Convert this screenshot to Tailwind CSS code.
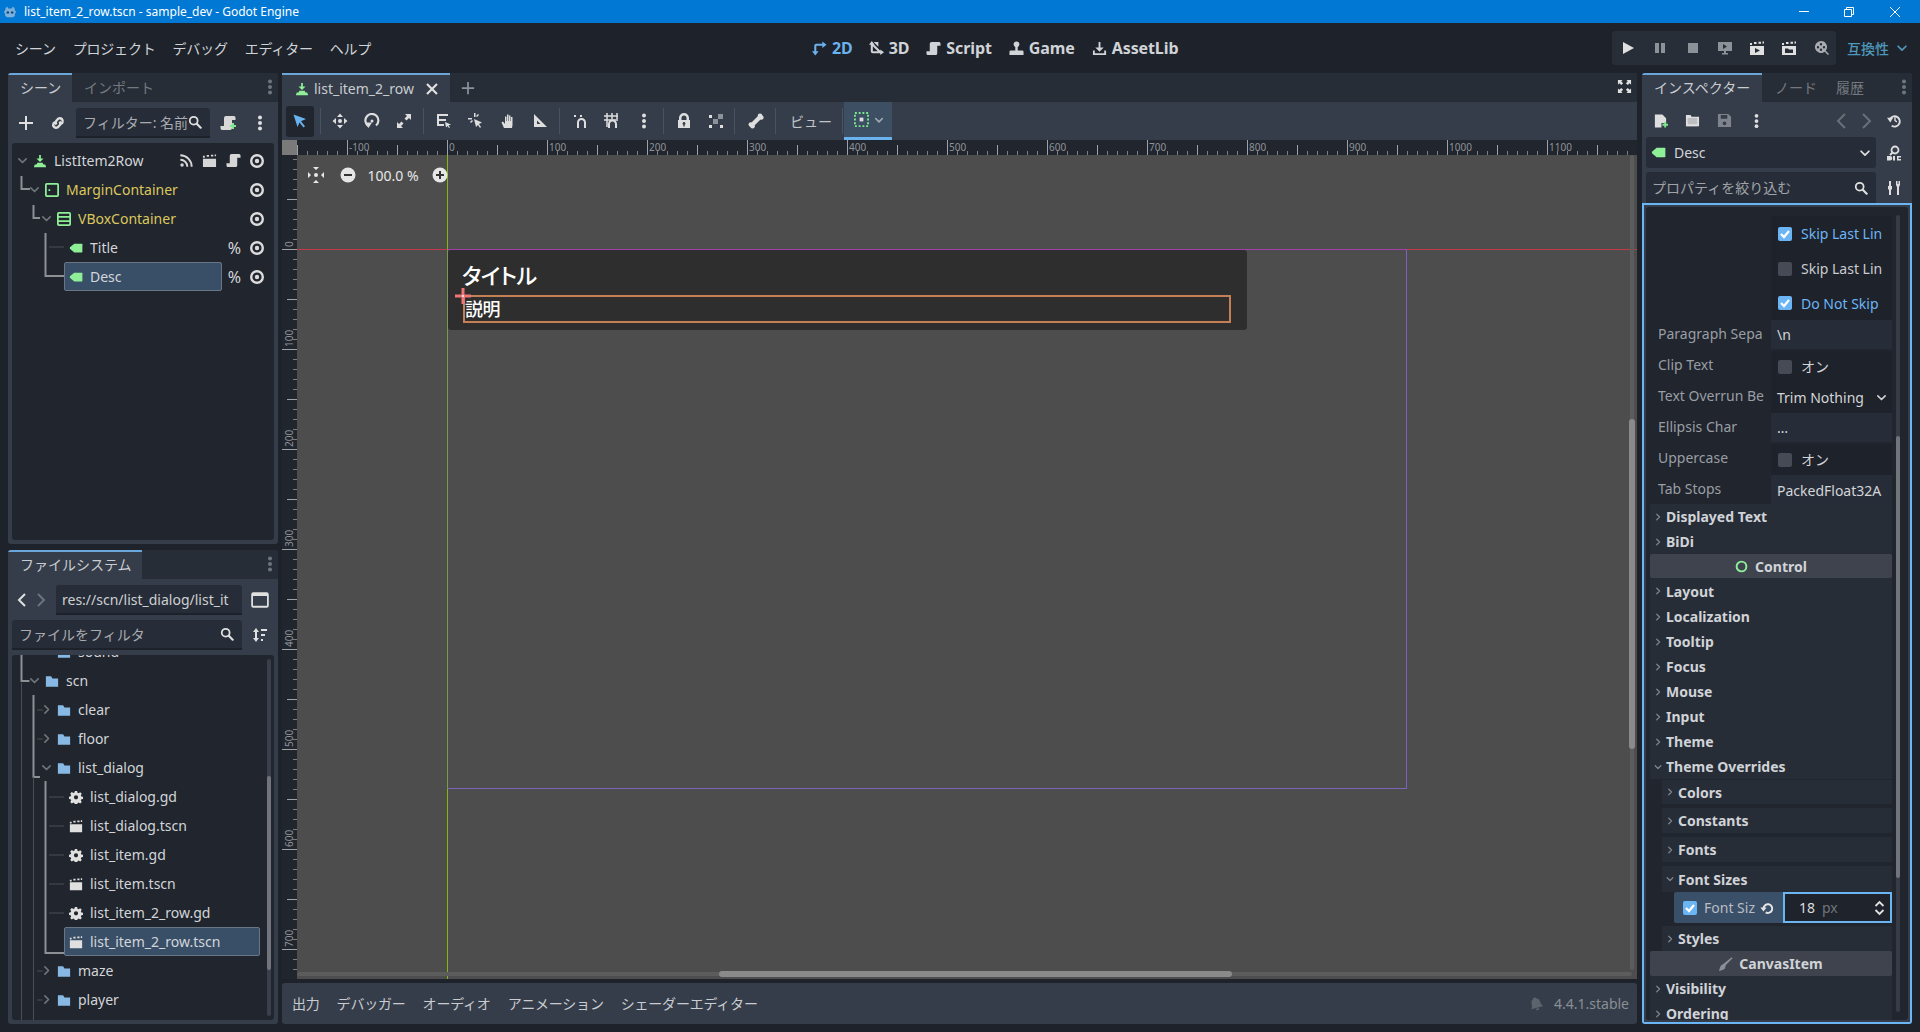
<!DOCTYPE html>
<html lang="ja">
<head>
  <meta charset="UTF-8" />
  <title>list_item_2_row.tscn - sample_dev - Godot Engine</title>
  <script src="https://cdn.jsdelivr.net/npm/@tailwindcss/browser@4"></script>
</head>
<body class="font-['Noto_Sans','Noto_Sans_CJK_JP',sans-serif] text-[14px] text-[#d3d5d8]">
  <!-- shared icons -->
  <svg class="absolute w-0 h-0" aria-hidden="true">
    <symbol id="i-eye" viewBox="0 0 16 16"><circle cx="8" cy="8" r="5.800" fill="none" stroke="currentColor" stroke-width="2.400"/><circle cx="8" cy="8" r="2.200"/></symbol>
    <symbol id="i-tag" viewBox="0 0 16 16"><path d="M6 3h8.500q.8 0 .8.8v8.400q0 .8-.8.8H6L1 8.800V7.200z"/></symbol>
    <symbol id="i-scene" viewBox="0 0 16 16"><path d="M7 1h2v4h3L8 9 4 5h3zM5 10h6l1 2h2l1 3H1l1-3h2z"/></symbol>
    <symbol id="i-down" viewBox="0 0 16 16"><path d="M3.500 6 8 10.500 12.500 6" fill="none" stroke="currentColor" stroke-width="2" stroke-linecap="round" stroke-linejoin="round"/></symbol>
    <symbol id="i-right" viewBox="0 0 16 16"><path d="M6 3.500 10.500 8 6 12.500" fill="none" stroke="currentColor" stroke-width="2" stroke-linecap="round" stroke-linejoin="round"/></symbol>
    <symbol id="i-search" viewBox="0 0 16 16"><circle cx="6.500" cy="6.500" r="4.500" fill="none" stroke="currentColor" stroke-width="2"/><path d="m10 10 4.500 4.500" stroke="currentColor" stroke-width="2.400" stroke-linecap="round"/></symbol>
    <symbol id="i-dots" viewBox="0 0 16 16"><circle cx="8" cy="2.500" r="2"/><circle cx="8" cy="8" r="2"/><circle cx="8" cy="13.500" r="2"/></symbol>
    <symbol id="i-folder" viewBox="0 0 16 16"><path d="M1 2.500h6l1.500 2.500H15v9.500H1z"/></symbol>
    <symbol id="i-gear" viewBox="0 0 16 16"><path fill-rule="evenodd" d="M6.700 1h2.600l.4 2 1.300.6 1.800-1.100 1.800 1.800-1.100 1.800.6 1.300 2 .4v2.400l-2 .4-.6 1.300 1.100 1.800-1.800 1.800-1.800-1.100-1.300.6-.4 2H6.700l-.4-2-1.300-.6-1.800 1.100-1.800-1.800 1.100-1.800-.6-1.300-2-.4V7.600l2-.4.6-1.300L1.400 4.100l1.800-1.800L5 3.400l1.300-.6zM8 6a2.400 2.400 0 1 0 0 4.800A2.400 2.400 0 0 0 8 6z"/></symbol>
    <symbol id="i-clap" viewBox="0 0 16 16"><path d="M1 6h14v9H1zM1 3h2v2H1zM5 2h2.500v2H5zM9.500 1.800H12v2H9.500zM13.500 1.500H15v2h-1.500z"/></symbol>
    <symbol id="i-script" viewBox="0 0 16 16"><path d="M6 1h8q1.500 0 1.500 2v2H12v8q0 2-2 2H2q-1.500 0-1.500-2v-2H4V3q0-2 2-2z"/></symbol>
    <symbol id="i-reset" viewBox="0 0 16 16"><path d="M4 8.500a5 5 0 1 1 2.500 4.500" fill="none" stroke="currentColor" stroke-width="2.200"/><path d="M.5 7.500h7l-3.500 4.500z"/></symbol>
  </svg>

  <div class="w-[1920px] h-[1032px] flex flex-col overflow-hidden bg-[#1e232b]">
    <!-- window title -->
    <div class="h-[23px] bg-[#0078d4] flex items-center text-white text-[12px] shrink-0">
      <svg class="w-[14px] h-[14px] ml-[3px] text-[#7fb0d8]" viewBox="0 0 16 16" fill="currentColor"><path d="M3 3l2-1 1 2h4l1-2 2 1 .5 3L15 8l-1.500 2v2.500L11 14H5l-2.500-1.500V10L1 8l1.500-2z"/><circle cx="5.500" cy="8.500" r="1.500" fill="#0b4e85"/><circle cx="10.500" cy="8.500" r="1.500" fill="#0b4e85"/></svg>
      <span class="ml-[7px] leading-none">list_item_2_row.tscn - sample_dev - Godot Engine</span>
      <div class="ml-auto flex items-center">
        <span class="w-[10px] h-px bg-white mr-[35px]"></span>
        <svg class="w-[10px] h-[10px] mr-[36px]" viewBox="0 0 10 10" fill="none" stroke="white"><path d="M.5 2.500h7v7h-7zM2.500 2.500v-2h7v7h-2"/></svg>
        <svg class="w-[10px] h-[10px] mr-[20px]" viewBox="0 0 10 10" fill="none" stroke="white"><path d="m0 0 10 10M10 0 0 10"/></svg>
      </div>
    </div>

    <!-- menu bar -->
    <div class="h-[50px] shrink-0 relative flex items-center">
      <nav class="flex gap-[17px] pl-[15px] text-[#d0d3d7] tracking-[-0.2px]">
        <span>シーン</span><span>プロジェクト</span><span>デバッグ</span><span>エディター</span><span>ヘルプ</span>
      </nav>
      <div class="absolute left-[812px] top-0 h-full flex items-center gap-[17px] text-[16px] font-bold text-[#d0d3d7] tracking-[-0.1px]">
        <span class="flex items-center gap-[5px] mr-[-1px] text-[#6ab2ee]"><svg class="w-[15px] h-[15px]" viewBox="0 0 16 16" fill="none" stroke="currentColor" stroke-width="2.200"><path d="M3.500 13V5q0-1 1-1h7"/><path fill="currentColor" stroke="none" d="M11 .5 15.500 4 11 7.500zM0 11h7l-3.500 4.500z"/></svg>2D</span>
        <span class="flex items-center gap-[5px]"><svg class="w-[15px] h-[15px]" viewBox="0 0 16 16" fill="none" stroke="currentColor" stroke-width="2.200"><path d="M3 2v9q0 1 1 1h9M3.500 3.500l8 8"/><path fill="currentColor" stroke="none" d="M3 0 6 4H0zM16 12l-4 3V9zM5 1h5v5z"/></svg>3D</span>
        <span class="flex items-center gap-[5px]"><svg class="w-[15px] h-[15px]" fill="currentColor"><use href="#i-script"/></svg>Script</span>
        <span class="flex items-center gap-[5px]"><svg class="w-[15px] h-[15px]" viewBox="0 0 16 16" fill="currentColor"><circle cx="8" cy="3.500" r="3"/><path d="M6.700 5h2.600v5H14q1.500 0 1.500 1.500V15H.5v-3.500Q.5 10 2 10h4.700z"/></svg>Game</span>
        <span class="flex items-center gap-[5px]"><svg class="w-[15px] h-[15px]" viewBox="0 0 16 16" fill="currentColor"><path d="M7 1h2v6h3.500L8 11.500 3.500 7H7zM1 10h2v3h10v-3h2v5H1z"/></svg>AssetLib</span>
      </div>
      <div class="ml-auto flex items-center">
        <div class="w-[224px] h-[34px] rounded-[3px] bg-[#282e38] flex items-center gap-[16.3px] pl-[8px] text-[#e0e0e0]">
          <svg class="w-[16px] h-[16px]" viewBox="0 0 16 16" fill="currentColor"><path d="M3 2l11 6-11 6z"/></svg>
          <svg class="w-[16px] h-[16px] text-[#8d9198]" viewBox="0 0 16 16" fill="currentColor"><path d="M3 3h4v10H3zM9 3h4v10H9z"/></svg>
          <svg class="w-[16px] h-[16px] text-[#8d9198]" viewBox="0 0 16 16" fill="currentColor"><path d="M3 3h10v10H3z"/></svg>
          <svg class="w-[16px] h-[16px] text-[#8d9198]" viewBox="0 0 16 16" fill="currentColor"><path fill-rule="evenodd" d="M1 2h14v9H9v2h2v1.500H5V13h2v-2H1zM6 4v5l4-2.500z"/></svg>
          <svg class="w-[16px] h-[16px]" viewBox="0 0 16 16" fill="currentColor"><path fill-rule="evenodd" d="M1 6h14v9H1zM6 8v5l5-2.500zM1 3h2v2H1zM5 2h2.500v2H5zM9.500 1.800H12v2H9.500zM13.500 1.500H15v2h-1.500z"/></svg>
          <svg class="w-[16px] h-[16px]" viewBox="0 0 16 16" fill="currentColor"><path fill-rule="evenodd" d="M1 6h14v9H1zM4 8.500V13h8V9.500H8l-1-1zM1 3h2v2H1zM5 2h2.500v2H5zM9.500 1.800H12v2H9.500zM13.500 1.500H15v2h-1.500z"/></svg>
          <svg class="w-[16px] h-[16px] text-[#a9acb1]" viewBox="0 0 16 16" fill="currentColor"><path fill-rule="evenodd" d="M7 1a6 6 0 0 1 4.700 9.700l3.300 3.300-1 1-3.300-3.300A6 6 0 1 1 7 1zM7 3a1.200 1.200 0 1 0 0 2.400A1.200 1.200 0 0 0 7 3zM4 6a1.200 1.200 0 1 0 0 2.400A1.200 1.200 0 0 0 4 6zM10 6a1.200 1.200 0 1 0 0 2.400A1.200 1.200 0 0 0 10 6zM7 8.600a1.200 1.200 0 1 0 0 2.400 1.200 1.200 0 0 0 0-2.400z"/></svg>
        </div>
        <span class="ml-[11px] text-[#4f97bb] font-medium">互換性</span>
        <svg class="w-[14px] h-[14px] ml-[6px] mr-[11px] text-[#4f97bb]" fill="currentColor"><use href="#i-down"/></svg>
      </div>
    </div>

    <div class="flex-1 flex px-[8px] pb-[8px] min-h-0">
      <!-- left docks -->
      <div class="w-[270px] shrink-0 flex flex-col gap-[6px]">
        <section class="h-[471px] flex flex-col rounded-[3px] bg-[#353d4a] overflow-hidden">
          <div class="h-[29px] bg-[#272d37] flex relative">
            <div class="w-[64px] border-t-2 border-[#6aa6da] bg-[#353d4a] pl-[12px] pt-[2px] text-[#c9ccd0]">シーン</div>
            <div class="pl-[12px] pt-[4px] text-[#74797f]">インポート</div>
            <svg class="absolute right-0 top-[6px] w-[16px] h-[16px] text-[#70757c]" fill="currentColor"><use href="#i-dots"/></svg>
          </div>
          <div class="h-[41px] pt-[1px] flex items-center">
            <svg class="w-[16px] h-[16px] ml-[10px] text-[#e0e0e0]" viewBox="0 0 16 16" fill="currentColor"><path d="M7 1h2v6h6v2H9v6H7V9H1V7h6z"/></svg>
            <svg class="w-[16px] h-[16px] ml-[16px] text-[#e0e0e0]" viewBox="0 0 16 16" fill="none" stroke="currentColor" stroke-width="2.400"><path d="M6.500 9.500a3 3 0 0 1 0-4l2-2a3 3 0 0 1 4 4L11 9M9.500 6.500a3 3 0 0 1 0 4l-2 2a3 3 0 0 1-4-4L5 7"/></svg>
            <div class="w-[134px] h-[30px] ml-[10px] rounded-t-[3px] bg-[#272d38] border-b-2 border-[#1d222a] flex items-center pl-[7px] pr-[8px] text-[#a8abb0] overflow-hidden">
              <span class="flex-1 whitespace-nowrap overflow-hidden">フィルター: 名前</span>
              <svg class="w-[14px] h-[14px] shrink-0 text-[#e0e0e0]" fill="currentColor"><use href="#i-search"/></svg>
            </div>
            <svg class="w-[16px] h-[16px] ml-[10px]" viewBox="0 0 16 16"><use href="#i-script" fill="#d8d8d8"/><path d="M10 10h2V8h2v2h2v2h-2v2h-2v-2h-2z" fill="#7ee88c"/></svg>
            <svg class="w-[16px] h-[16px] ml-[16px] text-[#e0e0e0]" fill="currentColor"><use href="#i-dots"/></svg>
          </div>
          <!-- scene tree -->
          <div class="relative mx-[4px] mb-[4px] flex-1 rounded-[3px] bg-[#20252e] pt-[3px]">
            <div class="h-[29px] flex items-center">
              <svg class="w-[13px] h-[13px] ml-[4px] text-[#70757c]" fill="currentColor"><use href="#i-down"/></svg>
              <svg class="w-[14px] h-[14px] ml-[4px] text-[#8eef97]" fill="currentColor"><use href="#i-scene"/></svg>
              <span class="ml-[7px]">ListItem2Row</span>
              <svg class="w-[14px] h-[14px] ml-auto text-[#d6d6d6]" viewBox="0 0 16 16" fill="none" stroke="currentColor" stroke-width="2.200"><circle cx="3.500" cy="12.500" r="2" fill="currentColor" stroke="none"/><path d="M1.500 6.500a8 8 0 0 1 8 8M1.500 1.500a13 13 0 0 1 13 13"/></svg>
              <svg class="w-[15px] h-[15px] ml-[9px] text-[#d6d6d6]" fill="currentColor"><use href="#i-clap"/></svg>
              <svg class="w-[15px] h-[15px] ml-[9px] text-[#d6d6d6]" fill="currentColor"><use href="#i-script"/></svg>
              <svg class="w-[16px] h-[16px] ml-[8px] mr-[9px] text-[#dcdcdc]" fill="currentColor"><use href="#i-eye"/></svg>
            </div>
            <div class="h-[29px] flex items-center pl-[16px]">
              <svg class="w-[13px] h-[13px] text-[#70757c]" fill="currentColor"><use href="#i-down"/></svg>
              <svg class="w-[14px] h-[14px] ml-[4px] text-[#8eef97]" viewBox="0 0 16 16" fill="none" stroke="currentColor" stroke-width="2"><rect x="1" y="1" width="14" height="14" rx="1"/><path d="M4 8h2" /></svg>
              <span class="ml-[7px] text-[#dcc75d]">MarginContainer</span>
              <svg class="w-[16px] h-[16px] ml-auto mr-[9px] text-[#dcdcdc]" fill="currentColor"><use href="#i-eye"/></svg>
            </div>
            <div class="h-[29px] flex items-center pl-[28px]">
              <svg class="w-[13px] h-[13px] text-[#70757c]" fill="currentColor"><use href="#i-down"/></svg>
              <svg class="w-[14px] h-[14px] ml-[4px] text-[#8eef97]" viewBox="0 0 16 16" fill="none" stroke="currentColor" stroke-width="2"><rect x="1" y="1" width="14" height="14" rx="1"/><path d="M1 5.700h14M1 10.300h14"/></svg>
              <span class="ml-[7px] text-[#dcc75d]">VBoxContainer</span>
              <svg class="w-[16px] h-[16px] ml-auto mr-[9px] text-[#dcdcdc]" fill="currentColor"><use href="#i-eye"/></svg>
            </div>
            <div class="h-[29px] flex items-center pl-[52px]">
              <svg class="w-[14px] h-[14px] ml-[5px] text-[#8eef97]" fill="currentColor"><use href="#i-tag"/></svg>
              <span class="ml-[7px]">Title</span>
              <span class="ml-auto text-[16px]">%</span>
              <svg class="w-[16px] h-[16px] ml-[8px] mr-[9px] text-[#dcdcdc]" fill="currentColor"><use href="#i-eye"/></svg>
            </div>
            <div class="h-[29px] flex items-center pl-[52px]">
              <div class="w-[158px] h-[29px] rounded-[2px] bg-[#394f68] border border-[#6a7686] flex items-center pl-[4px]">
                <svg class="w-[14px] h-[14px] text-[#8eef97]" fill="currentColor"><use href="#i-tag"/></svg>
                <span class="ml-[7px]">Desc</span>
              </div>
              <span class="ml-auto text-[16px]">%</span>
              <svg class="w-[16px] h-[16px] ml-[8px] mr-[9px] text-[#dcdcdc]" fill="currentColor"><use href="#i-eye"/></svg>
            </div>
            <!-- relationship lines -->
            <svg class="absolute left-0 top-0 pointer-events-none" width="60" height="150" fill="none" stroke="#8d9095">
              <path d="M9.500 33v13H18M21.500 62v13H28M33.500 90v43H52" stroke-width="2"/>
              <path d="M37 104h15" stroke="#4a4f57"/>
            </svg>
          </div>
        </section>

        <section class="h-[474px] flex flex-col rounded-[3px] bg-[#353d4a] overflow-hidden">
          <div class="h-[29px] bg-[#272d37] flex relative shrink-0">
            <div class="w-[134px] border-t-2 border-[#6aa6da] bg-[#353d4a] pl-[12px] pt-[2px] text-[#c9ccd0]">ファイルシステム</div>
            <svg class="absolute right-0 top-[6px] w-[16px] h-[16px] text-[#70757c]" fill="currentColor"><use href="#i-dots"/></svg>
          </div>
          <div class="h-[41px] pt-[6px] flex items-start shrink-0">
            <svg class="w-[16px] h-[18px] mt-[6px] ml-[6px] text-[#e0e0e0]" viewBox="0 0 16 18" fill="none" stroke="currentColor" stroke-width="2"><path d="M11 3 5 9l6 6"/></svg>
            <svg class="w-[16px] h-[18px] mt-[6px] ml-[3px] text-[#6f747b]" viewBox="0 0 16 18" fill="none" stroke="currentColor" stroke-width="2"><path d="m5 3 6 6-6 6"/></svg>
            <div class="w-[186px] h-[30px] ml-[7px] rounded-t-[3px] bg-[#272d38] border-b-2 border-[#1d222a] flex items-center pl-[6px] overflow-hidden whitespace-nowrap text-[#cdd0d3]">res://scn/list_dialog/list_it</div>
            <svg class="w-[18px] h-[18px] mt-[6px] ml-[9px]" viewBox="0 0 16 16" fill="none" stroke="#e0e0e0" stroke-width="1.600"><rect x="1" y="2" width="14" height="12" rx="1"/><path d="M1 3.500h14" stroke-width="2"/></svg>
          </div>
          <div class="h-[35px] flex items-start shrink-0 pl-[4px]">
            <div class="w-[230px] h-[30px] rounded-t-[3px] bg-[#272d38] border-b-2 border-[#1d222a] flex items-center pl-[7px] pr-[8px] text-[#a8abb0]">
              <span class="flex-1">ファイルをフィルタ</span>
              <svg class="w-[14px] h-[14px] text-[#e0e0e0]" fill="currentColor"><use href="#i-search"/></svg>
            </div>
            <svg class="w-[16px] h-[16px] mt-[7px] ml-[10px]" viewBox="0 0 16 16" fill="#e0e0e0"><path d="M4 1l3 4H5v6h2l-3 4-3-4h2V5H1zM9 2h6v2H9zM9 7h4v2H9zM9 12h2v2H9z"/></svg>
          </div>
          <!-- file tree -->
          <div class="relative mx-[4px] mb-[4px] flex-1 min-h-0 rounded-[3px] bg-[#20252e] overflow-hidden">
            <div class="h-[11px] relative overflow-hidden">
              <div class="absolute left-0 bottom-0 h-[29px] flex items-center pl-[45px]">
                <svg class="w-[14px] h-[14px] text-[#88b9e4]" fill="currentColor"><use href="#i-folder"/></svg>
                <span class="ml-[7px]">sound</span>
              </div>
            </div>
            <div class="h-[29px] flex items-center pl-[16px]">
              <svg class="w-[13px] h-[13px] text-[#70757c]" fill="currentColor"><use href="#i-down"/></svg>
              <svg class="w-[14px] h-[14px] ml-[4px] text-[#88b9e4]" fill="currentColor"><use href="#i-folder"/></svg>
              <span class="ml-[7px]">scn</span>
            </div>
            <div class="h-[29px] flex items-center pl-[28px]">
              <svg class="w-[13px] h-[13px] text-[#70757c]" fill="currentColor"><use href="#i-right"/></svg>
              <svg class="w-[14px] h-[14px] ml-[4px] text-[#88b9e4]" fill="currentColor"><use href="#i-folder"/></svg>
              <span class="ml-[7px]">clear</span>
            </div>
            <div class="h-[29px] flex items-center pl-[28px]">
              <svg class="w-[13px] h-[13px] text-[#70757c]" fill="currentColor"><use href="#i-right"/></svg>
              <svg class="w-[14px] h-[14px] ml-[4px] text-[#88b9e4]" fill="currentColor"><use href="#i-folder"/></svg>
              <span class="ml-[7px]">floor</span>
            </div>
            <div class="h-[29px] flex items-center pl-[28px]">
              <svg class="w-[13px] h-[13px] text-[#70757c]" fill="currentColor"><use href="#i-down"/></svg>
              <svg class="w-[14px] h-[14px] ml-[4px] text-[#88b9e4]" fill="currentColor"><use href="#i-folder"/></svg>
              <span class="ml-[7px]">list_dialog</span>
            </div>
            <div class="h-[29px] flex items-center pl-[57px]">
              <svg class="w-[14px] h-[14px] text-[#e0e0e0]" fill="currentColor"><use href="#i-gear"/></svg>
              <span class="ml-[7px]">list_dialog.gd</span>
            </div>
            <div class="h-[29px] flex items-center pl-[57px]">
              <svg class="w-[14px] h-[14px] text-[#e0e0e0]" fill="currentColor"><use href="#i-clap"/></svg>
              <span class="ml-[7px]">list_dialog.tscn</span>
            </div>
            <div class="h-[29px] flex items-center pl-[57px]">
              <svg class="w-[14px] h-[14px] text-[#e0e0e0]" fill="currentColor"><use href="#i-gear"/></svg>
              <span class="ml-[7px]">list_item.gd</span>
            </div>
            <div class="h-[29px] flex items-center pl-[57px]">
              <svg class="w-[14px] h-[14px] text-[#e0e0e0]" fill="currentColor"><use href="#i-clap"/></svg>
              <span class="ml-[7px]">list_item.tscn</span>
            </div>
            <div class="h-[29px] flex items-center pl-[57px]">
              <svg class="w-[14px] h-[14px] text-[#e0e0e0]" fill="currentColor"><use href="#i-gear"/></svg>
              <span class="ml-[7px]">list_item_2_row.gd</span>
            </div>
            <div class="h-[29px] flex items-center pl-[52px]">
              <div class="w-[196px] h-[29px] rounded-[2px] bg-[#394f68] border border-[#6a7686] flex items-center pl-[4px]">
                <svg class="w-[14px] h-[14px] text-[#e0e0e0]" fill="currentColor"><use href="#i-clap"/></svg>
                <span class="ml-[7px]">list_item_2_row.tscn</span>
              </div>
            </div>
            <div class="h-[29px] flex items-center pl-[28px]">
              <svg class="w-[13px] h-[13px] text-[#70757c]" fill="currentColor"><use href="#i-right"/></svg>
              <svg class="w-[14px] h-[14px] ml-[4px] text-[#88b9e4]" fill="currentColor"><use href="#i-folder"/></svg>
              <span class="ml-[7px]">maze</span>
            </div>
            <div class="h-[29px] flex items-center pl-[28px]">
              <svg class="w-[13px] h-[13px] text-[#70757c]" fill="currentColor"><use href="#i-right"/></svg>
              <svg class="w-[14px] h-[14px] ml-[4px] text-[#88b9e4]" fill="currentColor"><use href="#i-folder"/></svg>
              <span class="ml-[7px]">player</span>
            </div>
            <svg class="absolute left-0 top-0 pointer-events-none" width="70" height="365" fill="none" stroke="#8d9095">
              <path d="M9.500 0v26h8M21.500 40v82H28M33.500 126v172H52" stroke-width="2"/>
              <path d="M37 142h15M37 171h15M37 200h15M37 229h15M37 258h15M25 55h6M25 84h6M25 316h6M25 345h6M9.500 28v337M21.500 122v243" stroke="#4a4f57"/>
            </svg>
            <!-- tree scrollbar -->
            <div class="absolute right-[3px] top-[4px] bottom-[4px] w-[4px] rounded-[2px] bg-[#3a404b]">
              <div class="absolute left-0 top-[117px] h-[194px] w-[4px] rounded-[2px] bg-[#71757b]"></div>
            </div>
          </div>
        </section>
      </div>

      <!-- centre: scene editor -->
      <div class="w-[1355px] shrink-0 ml-[4px] flex flex-col">
        <div class="h-[29px] flex items-center bg-[#272d37] relative shrink-0">
          <div class="w-[168px] h-full border-t-2 border-[#6aa6da] bg-[#353d4a] flex items-center pl-[13px] text-[#c9ccd0]">
            <svg class="w-[14px] h-[14px] shrink-0 text-[#8eef97]" fill="currentColor"><use href="#i-scene"/></svg>
            <span class="ml-[5px]">list_item_2_row</span>
            <svg class="w-[12px] h-[12px] shrink-0 ml-[12px] text-[#e0e0e0]" viewBox="0 0 12 12" stroke="currentColor" stroke-width="2.200"><path d="m1 1 10 10M11 1 1 11"/></svg>
          </div>
          <svg class="w-[14px] h-[14px] ml-[11px] text-[#8d9198]" viewBox="0 0 16 16" fill="currentColor"><path d="M7 1h2v6h6v2H9v6H7V9H1V7h6z"/></svg>
          <svg class="absolute right-[5px] top-[6px] w-[15px] h-[15px] text-[#e0e0e0]" viewBox="0 0 16 16" fill="currentColor"><path d="M1 1h5L4.500 2.500l2 2-2 2-2-2L1 6zM15 1v5l-1.500-1.500-2 2-2-2 2-2L10 1zM1 15v-5l1.500 1.500 2-2 2 2-2 2L6 15zM15 15h-5l1.500-1.500-2-2 2-2 2 2L15 10z"/></svg>
        </div>
        <!-- 2d toolbar -->
        <div class="h-[38px] shrink-0 bg-[#353d4a] flex items-center text-[#dedede] pl-[4px]">
          <div class="w-[28px] h-[31px] rounded-[3px] bg-[#20252e] flex items-center justify-center"><svg class="w-[16px] h-[16px] text-[#6ab2ee]" viewBox="0 0 16 16" fill="currentColor"><path d="M1.500 1.500 14 6 9 8.200l4 5-1.500 1.300-4-5L5.500 14z"/></svg></div>
          <span class="w-px h-[26px] bg-[#4a5260] ml-[6px]"></span>
          <svg class="w-[16px] h-[16px] ml-[11px]" viewBox="0 0 16 16" fill="currentColor"><circle cx="8" cy="8" r="2"/><path d="M8 .5 11 4H5zM8 15.500 5 12h6zM.5 8 4 5v6zM15.500 8 12 11V5z"/></svg>
          <svg class="w-[16px] h-[16px] ml-[16px]" viewBox="0 0 16 16" fill="none" stroke="currentColor" stroke-width="2.200"><path d="M4.500 13A6.500 6.500 0 1 1 12 12.500"/><circle cx="8" cy="8" r="1.500" fill="currentColor" stroke="none"/><path d="M1 9.500h7L4.500 15z" fill="currentColor" stroke="none"/></svg>
          <svg class="w-[16px] h-[16px] ml-[16px]" viewBox="0 0 16 16" fill="currentColor"><path d="M9 1h6v6l-2-2-2.500 2.500-2-2L11 3zM7 15H1V9l2 2 2.500-2.500 2 2L5 13z"/></svg>
          <span class="w-px h-[26px] bg-[#4a5260] ml-[11px]"></span>
          <svg class="w-[16px] h-[16px] ml-[12px]" viewBox="0 0 16 16" fill="currentColor"><path d="M1 1h11v2H3v3h7v2H3v3h5v2H1zM9 9l6 2.500-2.500 1 1.500 2-1 .5-1.500-2L10 14.500z"/></svg>
          <svg class="w-[16px] h-[16px] ml-[16px]" viewBox="0 0 16 16" fill="currentColor"><path d="M0 5h4v1.500H0zM6 0h1.500v4H6zM10 1l1 1-2 2-1-1zM6 6l8 3.500-3 1.500 2 3-1 1-2-3-2 2zM2 9l2-2 1 1-2 2z"/></svg>
          <svg class="w-[16px] h-[16px] ml-[16px]" viewBox="0 0 16 16" fill="currentColor"><path d="M4 15 1.500 9.500l1.500-1 2 2.500V3.500h1.500V8H7V1.500h1.500V8H9V2.500h1.500V8h.5V4h1.500v8L12 15z"/></svg>
          <svg class="w-[16px] h-[16px] ml-[16px]" viewBox="0 0 16 16" fill="currentColor"><path fill-rule="evenodd" d="M2 1l13 13H2zM5 7.500V11h3.500z"/></svg>
          <span class="w-px h-[26px] bg-[#4a5260] ml-[11px]"></span>
          <svg class="w-[16px] h-[16px] ml-[13px]" viewBox="0 0 16 16" fill="none" stroke="currentColor" stroke-width="2"><path d="M5 15V9.500a3.500 3.500 0 0 1 7 0V15"/><path d="M1 2h2v2H1zM7 2h2v2H7z" fill="currentColor" stroke="none"/></svg>
          <svg class="w-[16px] h-[16px] ml-[15px]" viewBox="0 0 16 16" fill="none" stroke="currentColor" stroke-width="1.500"><path d="M0 3h14M0 7h14M3 0v14M8 0v6M13 0v6"/><path d="M5 15v-4a3.500 3.500 0 0 1 7 0v4" stroke-width="2"/></svg>
          <svg class="w-[16px] h-[16px] ml-[16px]" fill="currentColor"><use href="#i-dots"/></svg>
          <span class="w-px h-[26px] bg-[#4a5260] ml-[11px]"></span>
          <svg class="w-[16px] h-[16px] ml-[12px]" viewBox="0 0 16 16" fill="currentColor"><path fill-rule="evenodd" d="M3 7V5a5 5 0 0 1 10 0v2h1v8H2V7zM5.500 7h5V5a2.500 2.500 0 0 0-5 0zM8 9a1.500 1.500 0 0 0-.7 2.800v1.700h1.400v-1.700A1.500 1.500 0 0 0 8 9z"/></svg>
          <svg class="w-[16px] h-[16px] ml-[16px]" viewBox="0 0 16 16"><path d="M10 1h5v5h-5zM5 6h5v5H5z" fill="#8d9198"/><path d="M1 2h3v3H1zM1 12h3v3H1zM12 12h3v3h-3z" fill="#dedede"/></svg>
          <span class="w-px h-[26px] bg-[#4a5260] ml-[10px]"></span>
          <svg class="w-[16px] h-[16px] ml-[13px]" viewBox="0 0 16 16" fill="currentColor"><circle cx="12" cy="2.800" r="2.300"/><circle cx="13.300" cy="4.500" r="2.300"/><circle cx="2.800" cy="11.500" r="2.300"/><circle cx="4.500" cy="13.300" r="2.300"/><path d="M10 3l3 3-7 7-3-3z"/></svg>
          <span class="w-px h-[26px] bg-[#4a5260] ml-[11px]"></span>
          <span class="ml-[14px] w-[44px] text-[#c2c5c9]">ビュー</span>
          <span class="w-px h-[26px] bg-[#4a5260] ml-[8px]"></span>
          <div class="w-[48px] h-[38px] ml-[1px] bg-[#3d5063] border-b-[3px] border-[#6ab2ee] flex items-center pl-[10px]">
            <svg class="w-[15px] h-[15px]" viewBox="0 0 16 16" fill="none" stroke="#7ee88c" stroke-width="2" stroke-dasharray="2 2"><rect x="1" y="1" width="14" height="14"/><rect x="6" y="6" width="4" height="4" fill="#dedede" stroke="none"/></svg>
            <svg class="w-[12px] h-[12px] ml-[4px] text-[#a6abb2]" fill="currentColor"><use href="#i-down"/></svg>
          </div>
        </div>

        <!-- horizontal ruler -->
        <div class="h-[15px] shrink-0 flex bg-[#20252e]">
          <div class="w-[15px] bg-[#7a7a7a] shrink-0"></div>
          <svg class="flex-1 h-[15px]" font-size="10" fill="#8f9398">
            <defs>
              <pattern id="ruler-h" patternUnits="userSpaceOnUse" x="50" y="0" width="100" height="15">
                <path d="M.5 0v15" stroke="#9ea1a6"/><path d="M50.500 5v10" stroke="#9ea1a6"/>
                <path d="M10.500 11v4M20.500 11v4M30.500 11v4M40.500 11v4M60.500 11v4M70.500 11v4M80.500 11v4M90.500 11v4" stroke="#7b7f85"/>
              </pattern>
            </defs>
            <rect width="100%" height="15" fill="url(#ruler-h)"/>
            <text x="52" y="11">-100</text><text x="152" y="11">0</text><text x="252" y="11">100</text><text x="352" y="11">200</text><text x="452" y="11">300</text><text x="552" y="11">400</text><text x="652" y="11">500</text><text x="752" y="11">600</text><text x="852" y="11">700</text><text x="952" y="11">800</text><text x="1052" y="11">900</text><text x="1152" y="11">1000</text><text x="1252" y="11">1100</text>
          </svg>
        </div>

        <div class="flex-1 min-h-0 flex">
          <!-- vertical ruler -->
          <svg class="w-[15px] h-full shrink-0 bg-[#20252e]" font-size="10" fill="#8f9398">
            <defs>
              <pattern id="ruler-v" patternUnits="userSpaceOnUse" x="0" y="-6" width="15" height="100">
                <path d="M0 .5h15" stroke="#9ea1a6"/><path d="M5 50.500h10" stroke="#9ea1a6"/>
                <path d="M11 10.500h4M11 20.500h4M11 30.500h4M11 40.500h4M11 60.500h4M11 70.500h4M11 80.500h4M11 90.500h4" stroke="#7b7f85"/>
              </pattern>
            </defs>
            <rect width="15" height="100%" fill="url(#ruler-v)"/>
            <text transform="translate(11 92) rotate(-90)">0</text><text transform="translate(11 192) rotate(-90)">100</text><text transform="translate(11 292) rotate(-90)">200</text><text transform="translate(11 392) rotate(-90)">300</text><text transform="translate(11 492) rotate(-90)">400</text><text transform="translate(11 592) rotate(-90)">500</text><text transform="translate(11 692) rotate(-90)">600</text><text transform="translate(11 792) rotate(-90)">700</text>
          </svg>
          <!-- canvas: items placed at their scene coordinates -->
          <div class="relative flex-1 bg-[#4d4d4d] overflow-hidden">
            <div class="absolute left-[150px] top-0 bottom-0 w-px bg-[#84b80f]"></div>
            <div class="absolute left-0 right-0 top-[94px] h-px bg-[#c23a4a]"></div>
            <div class="absolute left-[150px] top-[94px] w-[960px] h-[540px] border border-[#7a63b8] border-t-[#a040a8] border-l-[#7a9a48]"></div>
            <div class="absolute left-[151px] top-[95px] w-[799px] h-[80px] rounded-[3px] bg-[#2e2e2e] text-white">
              <div class="absolute left-[14px] top-[7px] text-[22px] leading-[36px] font-medium tracking-[-0.3px] [font-feature-settings:'palt']">タイトル</div>
              <div class="absolute left-[15px] top-[45px] w-[768px] h-[28px] border-2 border-[#c47f55] text-[18px] leading-[24px] font-medium tracking-[-0.5px]">説明</div>
              <svg class="absolute left-[7px] top-[38px]" width="16" height="16"><path d="M8 0v16M0 8h16" stroke="#f07575" stroke-width="3"/><path d="M8 7v2M7 8h2" stroke="#fff"/></svg>
            </div>
            <!-- zoom widget -->
            <div class="absolute left-[11px] top-[12px] flex items-center h-[16px] text-[#e8e8e8]">
              <svg class="w-[16px] h-[16px]" viewBox="0 0 16 16" fill="currentColor"><circle cx="8" cy="8" r="2"/><path d="M0 5l3 3-3 3zM16 5l-3 3 3 3zM5 0l3 3 3-3zM5 16l3-3 3 3z"/></svg>
              <svg class="w-[16px] h-[16px] ml-[16px]" viewBox="0 0 16 16"><circle cx="8" cy="8" r="7.500" fill="#e6e6e6"/><path d="M4 7h8v2H4z" fill="#333"/></svg>
              <span class="ml-[6px] w-[62px] text-[14px] text-center">100.0 %</span>
              <svg class="w-[16px] h-[16px] ml-[8px]" viewBox="0 0 16 16"><circle cx="8" cy="8" r="7.500" fill="#e6e6e6"/><path d="M7 4h2v3h3v2H9v3H7V9H4V7h3z" fill="#333"/></svg>
            </div>
            <!-- canvas scrollbars -->
            <div class="absolute left-0 right-[5px] bottom-[3px] h-[4px] rounded-[2px] bg-[#5c5c5c]">
              <div class="absolute left-[422px] top-[-1px] w-[513px] h-[6px] rounded-[3px] bg-[#8a8a8a]"></div>
            </div>
            <div class="absolute right-[3px] top-0 bottom-[9px] w-[4px] rounded-[2px] bg-[#5c5c5c]">
              <div class="absolute top-[264px] left-[-1px] h-[330px] w-[6px] rounded-[3px] bg-[#8a8a8a]"></div>
            </div>
          </div>
        </div>

        <!-- bottom panel -->
        <div class="h-[41px] mt-[4px] shrink-0 rounded-[3px] bg-[#353d4a] flex items-center pl-[10px] pr-[8px] text-[#c9ccd0]">
          <span class="tracking-[-0.2px]">出力</span><span class="ml-[17px] tracking-[-0.2px]">デバッガー</span><span class="ml-[17px] tracking-[-0.2px]">オーディオ</span><span class="ml-[17px] tracking-[-0.2px]">アニメーション</span><span class="ml-[17px] tracking-[-0.2px]">シェーダーエディター</span>
          <svg class="w-[14px] h-[15px] ml-auto text-[#5d636c]" viewBox="0 0 16 16" fill="currentColor"><path d="M8 1a2 2 0 0 1 2 1.500q3 1 3 4.500 0 4 2 6H1q2-2 2-6 0-3.500 3-4.500A2 2 0 0 1 8 1zM6 14h4a2 2 0 0 1-4 0z" transform="rotate(-15 8 8)"/></svg>
          <span class="ml-[11px] text-[#8a8f96]">4.4.1.stable</span>
        </div>
      </div>

      <!-- inspector dock -->
      <section class="w-[270px] shrink-0 ml-[5px] flex flex-col rounded-[3px] bg-[#353d4a] overflow-hidden">
        <div class="h-[29px] bg-[#272d37] flex relative shrink-0">
          <div class="w-[120px] border-t-2 border-[#6aa6da] bg-[#353d4a] pl-[12px] pt-[2px] text-[#c9ccd0]">インスペクター</div>
          <div class="pl-[13px] pt-[4px] text-[#74797f]">ノード</div>
          <div class="pl-[19px] pt-[4px] text-[#74797f]">履歴</div>
          <svg class="absolute right-0 top-[6px] w-[16px] h-[16px] text-[#70757c]" fill="currentColor"><use href="#i-dots"/></svg>
        </div>
        <div class="h-[35px] pt-[2px] flex items-center shrink-0 text-[#dedede]">
          <svg class="w-[15px] h-[16px] ml-[11px]" viewBox="0 0 16 16"><path d="M2 1h8l4 4v5H9v5H2z" fill="#dedede"/><path d="M10 11h2V9h2v2h2v2h-2v2h-2v-2h-2z" fill="#7ee88c"/></svg>
          <svg class="w-[15px] h-[15px] ml-[17px]" viewBox="0 0 16 16" fill="currentColor"><path fill-rule="evenodd" d="M1 2h5l1 2h8v10H1zM3 6v6h10V6z"/><path d="M3 6h12l-2 8H1z" opacity=".8"/></svg>
          <svg class="w-[15px] h-[15px] ml-[17px] text-[#7f848c]" viewBox="0 0 16 16" fill="currentColor"><path fill-rule="evenodd" d="M1 1h11l3 3v11H1zM4 2v4h7V2zM8 9a2 2 0 1 0 0 4 2 2 0 0 0 0-4z"/></svg>
          <svg class="w-[15px] h-[16px] ml-[17px]" fill="currentColor"><use href="#i-dots"/></svg>
          <svg class="w-[14px] h-[18px] ml-[71px] text-[#6a6f77]" viewBox="0 0 14 18" fill="none" stroke="currentColor" stroke-width="2"><path d="M10 2 3 9l7 7"/></svg>
          <svg class="w-[14px] h-[18px] ml-[10px] text-[#6a6f77]" viewBox="0 0 14 18" fill="none" stroke="currentColor" stroke-width="2"><path d="m4 2 7 7-7 7"/></svg>
          <svg class="w-[15px] h-[15px] ml-[14px]" viewBox="0 0 16 16" fill="none" stroke="currentColor" stroke-width="2"><path d="M3.500 6A5.500 5.500 0 1 1 5 13.500"/><path d="M0 5h6.500l-3 5z" fill="currentColor" stroke="none"/><path d="M8.500 4.500V8l2 1.500" stroke-width="1.500"/></svg>
        </div>
        <div class="h-[31px] flex items-center shrink-0 pl-[4px]">
          <div class="w-[230px] h-[31px] rounded-[3px] bg-[#272d38] flex items-center pl-[5px] pr-[4px]">
            <svg class="w-[15px] h-[15px] text-[#8eef97]" fill="currentColor"><use href="#i-tag"/></svg>
            <span class="ml-[8px] flex-1">Desc</span>
            <svg class="w-[14px] h-[14px] text-[#e0e0e0]" fill="currentColor"><use href="#i-down"/></svg>
          </div>
          <svg class="w-[16px] h-[16px] ml-[10px]" viewBox="0 0 16 16"><circle cx="9" cy="5" r="3.500" fill="none" stroke="#dedede" stroke-width="1.800"/><path d="M6.500 7.500 4 10" stroke="#dedede" stroke-width="2"/><path d="M1 11h3a2 2 0 0 1 0 4.500H1zM7 11h2v4.500H7zM11 11h4v1.500h-2.500V14H15v1.500h-4z" fill="#dedede"/></svg>
        </div>
        <div class="h-[35px] pt-[4px] flex items-center shrink-0 pl-[4px]">
          <div class="w-[230px] h-[31px] rounded-t-[3px] bg-[#272d38] flex items-center pl-[6px] pr-[8px] text-[#a0a4a9]">
            <span class="flex-1">プロパティを絞り込む</span>
            <svg class="w-[14px] h-[14px] text-[#e0e0e0]" fill="currentColor"><use href="#i-search"/></svg>
          </div>
          <svg class="w-[16px] h-[16px] ml-[10px]" viewBox="0 0 16 16" fill="#dedede"><path d="M3 1h2v5h1v3l-1 1v5H3v-5L2 9V6h1zM10 1h1.500v3h1V1H14v4l-1 2v8h-2V7l-1-2z"/></svg>
        </div>

        <!-- property list -->
        <div class="relative flex-1 min-h-0 border-2 border-[#6cb5f5] p-[2px] overflow-hidden">
          <div class="relative h-full bg-[#20252e] rounded-[3px] overflow-hidden pl-[4px]">
            <div class="w-[242px] pt-[9px]">
              <div class="h-[35px] ml-[121px] flex items-center bg-[#1e222a]">
                <span class="w-[14px] h-[14px] ml-[7px] rounded-[2px] bg-[#6cb5f5] flex items-center justify-center"><svg class="w-[10px] h-[10px]" viewBox="0 0 10 10" fill="none" stroke="#fff" stroke-width="2.200"><path d="m1 5 3 3 5-6"/></svg></span>
                <span class="ml-[9px] text-[#6cb5f5]">Skip Last Lin</span>
              </div>
              <div class="h-[35px] ml-[121px] flex items-center bg-[#1e222a]">
                <span class="w-[14px] h-[14px] ml-[7px] rounded-[2px] bg-[#454a55]"></span>
                <span class="ml-[9px] text-[#c9ccd0]">Skip Last Lin</span>
              </div>
              <div class="h-[34px] ml-[121px] flex items-center bg-[#1e222a]">
                <span class="w-[14px] h-[14px] ml-[7px] rounded-[2px] bg-[#6cb5f5] flex items-center justify-center"><svg class="w-[10px] h-[10px]" viewBox="0 0 10 10" fill="none" stroke="#fff" stroke-width="2.200"><path d="m1 5 3 3 5-6"/></svg></span>
                <span class="ml-[9px] text-[#6cb5f5]">Do Not Skip</span>
              </div>
              <div class="h-[31px] flex items-start">
                <span class="w-[121px] pl-[8px] pt-[3px] text-[#9a9ea4] whitespace-nowrap overflow-hidden">Paragraph Sepa</span>
                <span class="flex-1 h-[29px] bg-[#272d38] pl-[6px] pt-[4px]">\n</span>
              </div>
              <div class="h-[31px] flex">
                <span class="w-[121px] pl-[8px] pt-[3px] text-[#9a9ea4]">Clip Text</span>
                <span class="flex-1 flex items-center bg-[#1e222a]"><span class="w-[14px] h-[14px] ml-[7px] rounded-[2px] bg-[#454a55]"></span><span class="ml-[9px]">オン</span></span>
              </div>
              <div class="h-[31px] flex">
                <span class="w-[121px] pl-[8px] pt-[3px] text-[#9a9ea4] whitespace-nowrap overflow-hidden">Text Overrun Be</span>
                <span class="flex-1 flex items-center bg-[#1e222a] pl-[6px] pb-[1px]">Trim Nothing<svg class="w-[13px] h-[13px] ml-auto mr-[4px] text-[#d0d0d0]" fill="currentColor"><use href="#i-down"/></svg></span>
              </div>
              <div class="h-[31px] flex items-start">
                <span class="w-[121px] pl-[8px] pt-[3px] text-[#9a9ea4]">Ellipsis Char</span>
                <span class="flex-1 h-[29px] bg-[#272d38] pl-[6px] pt-[4px]">…</span>
              </div>
              <div class="h-[31px] flex">
                <span class="w-[121px] pl-[8px] pt-[3px] text-[#9a9ea4]">Uppercase</span>
                <span class="flex-1 flex items-center bg-[#1e222a]"><span class="w-[14px] h-[14px] ml-[7px] rounded-[2px] bg-[#454a55]"></span><span class="ml-[9px]">オン</span></span>
              </div>
              <div class="h-[29px] flex items-start">
                <span class="w-[121px] pl-[8px] pt-[3px] text-[#9a9ea4]">Tab Stops</span>
                <span class="flex-1 h-[29px] bg-[#272d38] pl-[6px] pt-[5px]">PackedFloat32A</span>
              </div>

              <!-- groups -->
              <div class="bg-[#272d37] font-bold text-[#d0d3d7]">
                <div class="h-[25px] flex items-center"><svg class="w-[10px] h-[10px] ml-[3px] text-[#7f848b]" fill="currentColor"><use href="#i-right"/></svg><span class="ml-[3px]">Displayed Text</span></div>
                <div class="h-[25px] flex items-center"><svg class="w-[10px] h-[10px] ml-[3px] text-[#7f848b]" fill="currentColor"><use href="#i-right"/></svg><span class="ml-[3px]">BiDi</span></div>
                <div class="h-[24px] rounded-[2px] bg-[#3e434d] flex items-center justify-center"><svg class="w-[13px] h-[13px]" viewBox="0 0 16 16" fill="none" stroke="#8eef97" stroke-width="2.400"><circle cx="8" cy="8" r="6"/></svg><span class="ml-[7px]">Control</span></div>
                <div class="h-[26px] flex items-center"><svg class="w-[10px] h-[10px] ml-[3px] text-[#7f848b]" fill="currentColor"><use href="#i-right"/></svg><span class="ml-[3px]">Layout</span></div>
                <div class="h-[25px] flex items-center"><svg class="w-[10px] h-[10px] ml-[3px] text-[#7f848b]" fill="currentColor"><use href="#i-right"/></svg><span class="ml-[3px]">Localization</span></div>
                <div class="h-[25px] flex items-center"><svg class="w-[10px] h-[10px] ml-[3px] text-[#7f848b]" fill="currentColor"><use href="#i-right"/></svg><span class="ml-[3px]">Tooltip</span></div>
                <div class="h-[25px] flex items-center"><svg class="w-[10px] h-[10px] ml-[3px] text-[#7f848b]" fill="currentColor"><use href="#i-right"/></svg><span class="ml-[3px]">Focus</span></div>
                <div class="h-[25px] flex items-center"><svg class="w-[10px] h-[10px] ml-[3px] text-[#7f848b]" fill="currentColor"><use href="#i-right"/></svg><span class="ml-[3px]">Mouse</span></div>
                <div class="h-[25px] flex items-center"><svg class="w-[10px] h-[10px] ml-[3px] text-[#7f848b]" fill="currentColor"><use href="#i-right"/></svg><span class="ml-[3px]">Input</span></div>
                <div class="h-[25px] flex items-center"><svg class="w-[10px] h-[10px] ml-[3px] text-[#7f848b]" fill="currentColor"><use href="#i-right"/></svg><span class="ml-[3px]">Theme</span></div>
                <div class="h-[25px] flex items-center"><svg class="w-[10px] h-[10px] ml-[3px] text-[#7f848b]" fill="currentColor"><use href="#i-down"/></svg><span class="ml-[3px]">Theme Overrides</span></div>
              </div>
              <div class="pl-[12px] pt-[1px] font-bold text-[#d0d3d7] flex flex-col">
                <div class="h-[24px] bg-[#272d37] flex items-center"><svg class="w-[10px] h-[10px] ml-[3px] text-[#7f848b]" fill="currentColor"><use href="#i-right"/></svg><span class="ml-[3px]">Colors</span></div>
                <div class="h-[25px] mt-[4px] bg-[#272d37] flex items-center"><svg class="w-[10px] h-[10px] ml-[3px] text-[#7f848b]" fill="currentColor"><use href="#i-right"/></svg><span class="ml-[3px]">Constants</span></div>
                <div class="h-[25px] mt-[4px] bg-[#272d37] flex items-center"><svg class="w-[10px] h-[10px] ml-[3px] text-[#7f848b]" fill="currentColor"><use href="#i-right"/></svg><span class="ml-[3px]">Fonts</span></div>
                <div class="h-[26px] mt-[4px] bg-[#272d37] flex items-center"><svg class="w-[10px] h-[10px] ml-[3px] text-[#7f848b]" fill="currentColor"><use href="#i-down"/></svg><span class="ml-[3px]">Font Sizes</span></div>
                <div class="h-[31px] ml-[12px] bg-[#3a5069] rounded-[2px] flex items-center font-normal text-[#b9bdc2]">
                  <span class="w-[14px] h-[14px] ml-[9px] rounded-[2px] bg-[#6cb5f5] flex items-center justify-center"><svg class="w-[10px] h-[10px]" viewBox="0 0 10 10" fill="none" stroke="#fff" stroke-width="2.200"><path d="m1 5 3 3 5-6"/></svg></span>
                  <span class="ml-[7px]">Font Siz</span>
                  <svg class="w-[14px] h-[14px] ml-[5px] text-[#e6e6e6]" fill="currentColor"><use href="#i-reset"/></svg>
                  <span class="w-[109px] h-[31px] ml-auto border-2 border-[#6cb5f5] bg-[#1e232c] flex items-center pl-[14px] text-[#dcdcdc]">18<span class="ml-[7px] text-[#6f747b]">px</span>
                    <svg class="w-[11px] h-[16px] ml-auto mr-[5px]" viewBox="0 0 11 16" fill="none" stroke="#e0e0e0" stroke-width="1.800"><path d="m1.500 6 4-4 4 4M1.500 10l4 4 4-4"/></svg>
                  </span>
                </div>
                <div class="h-[25px] mt-[3px] bg-[#272d37] flex items-center"><svg class="w-[10px] h-[10px] ml-[3px] text-[#7f848b]" fill="currentColor"><use href="#i-right"/></svg><span class="ml-[3px]">Styles</span></div>
              </div>
              <div class="font-bold text-[#d0d3d7] bg-[#272d37]">
                <div class="h-[25px] rounded-[2px] bg-[#3e434d] flex items-center justify-center"><svg class="w-[14px] h-[14px]" viewBox="0 0 16 16"><path d="M15 1 7 9 6 8zM7 9 6 8l-3 2q-1 1-2 5 4-1 5-2z" stroke="#8a8f96" stroke-width="1.500" fill="#8a8f96"/></svg><span class="ml-[6px]">CanvasItem</span></div>
                <div class="h-[25px] flex items-center"><svg class="w-[10px] h-[10px] ml-[3px] text-[#7f848b]" fill="currentColor"><use href="#i-right"/></svg><span class="ml-[3px]">Visibility</span></div>
                <div class="h-[25px] flex items-center"><svg class="w-[10px] h-[10px] ml-[3px] text-[#7f848b]" fill="currentColor"><use href="#i-right"/></svg><span class="ml-[3px]">Ordering</span></div>
              </div>
            </div>
            <!-- list scrollbar -->
            <div class="absolute right-[8px] top-[8px] bottom-[8px] w-[4px] rounded-[2px] bg-[#363b45]">
              <div class="absolute left-0 top-[221px] h-[442px] w-[4px] rounded-[2px] bg-[#71757b]"></div>
            </div>
          </div>
        </div>
      </section>
    </div>
  </div>
</body>
</html>
